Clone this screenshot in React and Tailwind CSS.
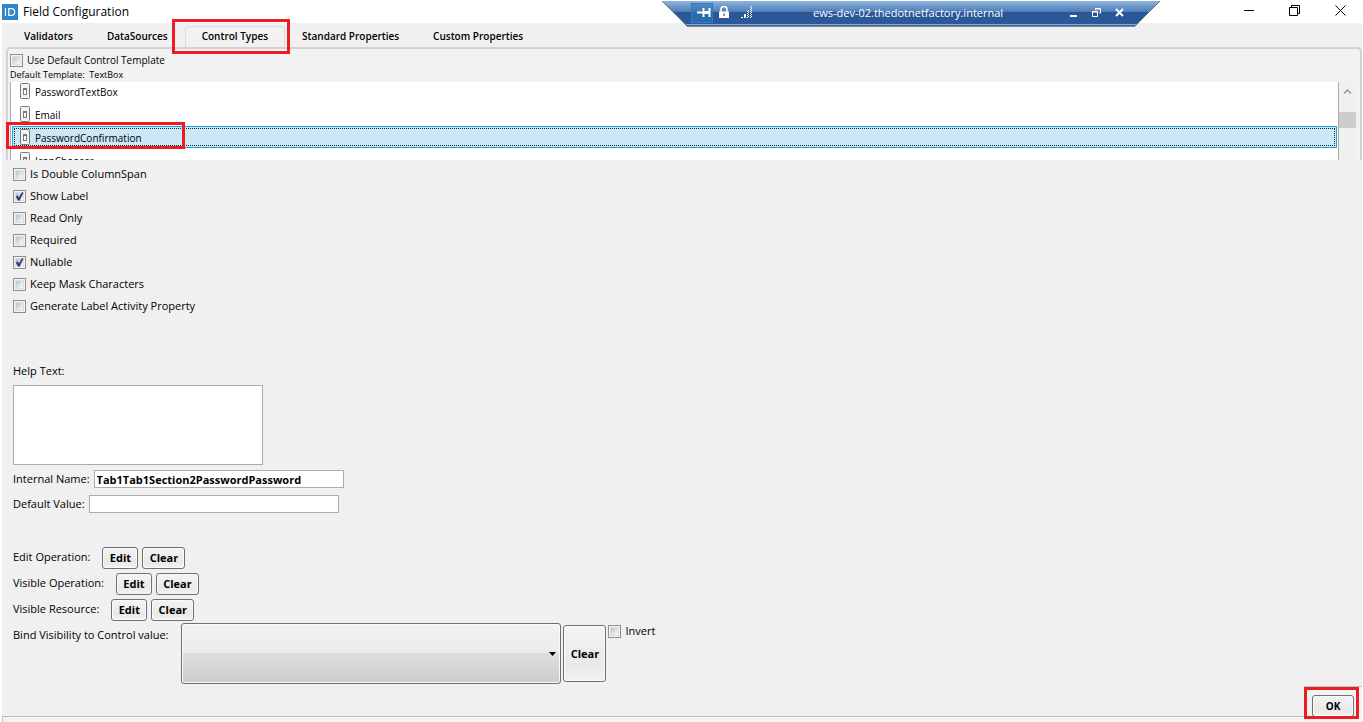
import { useState } from 'react';
import clsx from 'clsx';

const tabs = ['Validators', 'DataSources', 'Control Types', 'Standard Properties', 'Custom Properties'];

const templates = ['PasswordTextBox', 'Email', 'PasswordConfirmation', 'IconChooser'];

const options = [
  { label: 'Is Double ColumnSpan', checked: false },
  { label: 'Show Label', checked: true },
  { label: 'Read Only', checked: false },
  { label: 'Required', checked: false },
  { label: 'Nullable', checked: true },
  { label: 'Keep Mask Characters', checked: false },
  { label: 'Generate Label Activity Property', checked: false },
];

const operations = ['Edit Operation:', 'Visible Operation:', 'Visible Resource:'];

function Highlight({ className }) {
  return <div className={clsx('absolute pointer-events-none border-3 border-[#ed1c24] z-10', className)} />;
}

function CheckBox({ label, checked = false, className }) {
  return (
    <label className={clsx('flex w-fit items-center gap-1', className)}>
      <span className="relative h-[13px] w-[13px] shrink-0">
        <input
          type="checkbox"
          defaultChecked={checked}
          className="peer block h-[13px] w-[13px] appearance-none border border-[#8e8f8f] bg-linear-to-br from-[#a9afba] to-[#fbfbfb] to-80% shadow-[inset_0_0_0_1px_#f4f4f4,inset_0_0_0_2px_#dcdee0]"
        />
        <svg viewBox="0 0 13 13" className="absolute inset-0 hidden h-[13px] w-[13px] pointer-events-none peer-checked:block">
          <path d="M3 6.4 4.7 5.8 5.8 8 9 2.6 10.2 2.8 6.4 10.4 5.2 10.4Z" fill="#28307c" stroke="#28307c" strokeWidth="0.4" />
        </svg>
      </span>
      <span>{label}</span>
    </label>
  );
}

function PushButton({ children, className }) {
  return (
    <button
      type="button"
      className={clsx(
        'rounded-[3px] border border-[#707070] bg-linear-to-b from-[#f4f4f4] via-[#e8e8e8] via-70% to-[#f3f3f3] text-center font-bold shadow-[inset_0_0_0_1px_#fafafa]',
        className
      )}
    >
      {children}
    </button>
  );
}

function TemplateIcon() {
  return (
    <svg width="10" height="16" viewBox="0 0 10 16" className="shrink-0">
      <rect x="0.5" y="0.5" width="9" height="15" rx="1" fill="#f4f4f4" stroke="#777" />
      <rect x="3.5" y="5.5" width="3" height="6" fill="#fff" stroke="#777" />
      <path d="M4 6.500h2" stroke="#777" />
    </svg>
  );
}

function RemoteBar() {
  return (
    <div className="absolute left-[662px] top-0 h-[27px] w-[499px] text-white">
      <svg viewBox="0 0 499 27" className="absolute inset-0 h-[27px] w-[499px]">
        <defs>
          <linearGradient id="remote" x1="0" y1="0" x2="0" y2="1">
            <stop offset="0" stopColor="#8db4dc" />
            <stop offset="0.44" stopColor="#4c7ab4" />
            <stop offset="0.45" stopColor="#2a5696" />
            <stop offset="1" stopColor="#2a5a9c" />
          </linearGradient>
        </defs>
        <path d="M0.5 1H498L473 26.5H25Z" fill="url(#remote)" />
        <path d="M24 24.5H475" stroke="#8aa9d6" />
        <path d="M0 1 25.500 26H473L498 1" fill="none" stroke="#626a76" />
      </svg>
      <div className="relative flex h-[25px] items-center pl-[29px] pr-[30px]">
        <button type="button" aria-label="Pin" className="h-5 w-[22px] border border-[#2d7dc8] bg-[#2f77bd]/60">
          <svg width="19" height="18" viewBox="0 0 19 18">
            <path d="M5 8.500h6M11.500 4v9M17.500 4v9" stroke="#fff" strokeWidth="2" fill="none" />
            <path d="M12 8.500h5" stroke="#fff" strokeWidth="3" />
          </svg>
        </button>
        <svg width="10" height="13" viewBox="0 0 10 13" className="ml-1.5">
          <path d="M2 6V3.500a3 3 0 0 1 6 0V6" fill="none" stroke="#fff" strokeWidth="1.600" />
          <path d="M0 5.500h10V12H0z" fill="#fff" />
          <path d="M4.500 7.500h1.200v2.500h-1.200z" fill="#2a5696" />
        </svg>
        <svg width="12" height="13" viewBox="0 0 12 13" className="ml-3">
          <path d="M0 11h2v1H0zM3 8h2v4H3z" fill="#fff" />
          <path d="M6.500 12V5M9.500 12V1" stroke="#fff" strokeDasharray="1 1" fill="none" />
          <path d="M7.500 11V4M10.500 11V0" stroke="#fff" strokeDasharray="1 1" fill="none" />
        </svg>
        <span className="ml-15 grow text-[11px]">ews-dev-02.thedotnetfactory.internal</span>
        <div className="flex">
          <button type="button" aria-label="Minimize session" className="flex h-5 w-[23px] items-center justify-center">
            <svg width="11" height="11" viewBox="0 0 11 11"><path d="M2 9h7" stroke="#fff" strokeWidth="2" /></svg>
          </button>
          <button type="button" aria-label="Restore session" className="flex h-5 w-[23px] items-center justify-center">
            <svg width="11" height="11" viewBox="0 0 11 11">
              <path d="M1.500 4.500h5v5h-5zM1 5h6M4.500 3V1.500h5v4.500H8M4 2h6" fill="none" stroke="#fff" />
            </svg>
          </button>
          <button type="button" aria-label="Close session" className="flex h-5 w-[23px] items-center justify-center">
            <svg width="11" height="11" viewBox="0 0 11 11"><path d="M2 2l7 7M9 2l-7 7" stroke="#fff" strokeWidth="2" /></svg>
          </button>
        </div>
      </div>
    </div>
  );
}

function TitleBar() {
  return (
    <header className="relative flex h-[23px] items-center bg-white pl-0.5">
      <svg width="16" height="16" viewBox="0 0 16 16">
        <rect width="16" height="16" fill="#2e86cf" />
        <path d="M3.500 4v8M6.800 4.600v6.800h2.400q3.500 0 3.500-3.400t-3.500-3.400z" fill="none" stroke="#fff" strokeWidth="1.200" />
      </svg>
      <h1 className="ml-[5px] grow text-[12px] leading-4">Field Configuration</h1>
      <RemoteBar />
      <div className="flex pb-0.5">
        <button type="button" aria-label="Minimize" className="flex w-[46px] justify-center">
          <svg width="11" height="11" viewBox="0 0 11 11"><path d="M1 5.500h10" stroke="#000" /></svg>
        </button>
        <button type="button" aria-label="Restore" className="flex w-[46px] justify-center">
          <svg width="11" height="11" viewBox="0 0 11 11">
            <path d="M0.500 2.500h8v8h-8zM2.500 2.500v-2h8v8h-2" fill="none" stroke="#000" />
          </svg>
        </button>
        <button type="button" aria-label="Close" className="flex w-[46px] justify-center">
          <svg width="11" height="11" viewBox="0 0 11 11"><path d="M0.500 0.500l10 10M10.500 0.500l-10 10" stroke="#000" /></svg>
        </button>
      </div>
    </header>
  );
}

function TemplateList() {
  const [selected, setSelected] = useState('PasswordConfirmation');

  return (
    <div className="relative mr-0.5 flex h-[78px]">
      <Highlight className="-left-1 top-10 h-[27px] w-[179px]" />
      <ul className="grow overflow-hidden border-x border-[#ababab] bg-white pl-px pr-px" role="listbox">
        {templates.map((name) => (
          <li
            key={name}
            role="option"
            aria-selected={name === selected}
            onClick={() => setSelected(name)}
            className={clsx(
              'mb-px h-[22px] border p-px first:-mt-0.5',
              name === selected ? 'border-[#26a0da] bg-[#cbe8f6]' : 'border-transparent'
            )}
          >
            <div
              className={clsx(
                'flex h-full items-center gap-[5px] border border-dotted pl-[5px]',
                name === selected ? 'border-[#222]' : 'border-transparent'
              )}
            >
              <TemplateIcon />
              <span className="pt-0.5">{name}</span>
            </div>
          </li>
        ))}
      </ul>
      <div className="w-[17px] bg-[#f0f0f0]">
        <div className="flex h-[30px] justify-center pt-[5px]">
          <svg width="9" height="9" viewBox="0 0 9 9"><path d="M1 6.500 4.500 3 8 6.500" fill="none" stroke="#999" strokeWidth="1.500" /></svg>
        </div>
        <div className="h-4 bg-[#cdcdcd]" />
      </div>
    </div>
  );
}

export default function App() {
  return (
    <div className="flex min-h-screen flex-col bg-white font-['Open_Sans',sans-serif] text-[11px] leading-4 text-black">
      <TitleBar />
      <main className="ml-0.5 mr-px flex grow flex-col bg-[#f0f0f0]">
        <nav className="flex h-6 items-end pl-[5px] text-[10px] font-semibold">
          {tabs.map((tab) => (
            <button
              key={tab}
              type="button"
              className={clsx(
                'relative h-[21px] rounded-t-[4px] border border-b-0 px-4 pb-0.5',
                tab === 'Control Types' ? 'border-[#dcdcdc] bg-[#f2f2f2]' : 'border-transparent'
              )}
            >
              {tab}
              {tab === 'Control Types' && <Highlight className="-left-3.5 -right-1.5 -top-2 h-[35px]" />}
            </button>
          ))}
        </nav>

        <section className="ml-1 rounded-t-[5px] border-2 border-b-0 border-[#d2d2d2] bg-[#f2f2f2] px-0.5 pt-[3px] text-[10px]">
          <CheckBox label="Use Default Control Template" />
          <p className="h-[14px] pt-px text-[9px] leading-3">Default Template:&nbsp; TextBox</p>
          <TemplateList />
        </section>

        <div className="flex flex-col gap-1.5 px-[11px] pt-1.5">
          {options.map((option) => (
            <CheckBox key={option.label} {...option} />
          ))}
        </div>

        <form className="px-[11px] pt-[49px]">
          <label htmlFor="help" className="block">Help Text:</label>
          <textarea id="help" className="mt-1.5 block h-20 w-[250px] resize-none border border-[#abadb3] bg-white" />
          <div className="mt-[5px] flex items-center gap-1">
            <label htmlFor="internal">Internal Name:</label>
            <input
              id="internal"
              defaultValue="Tab1Tab1Section2PasswordPassword"
              className="h-[18px] w-[250px] border border-[#abadb3] bg-white px-0.5 font-bold"
            />
          </div>
          <div className="mt-[7px] flex items-center gap-1">
            <label htmlFor="default">Default Value:</label>
            <input id="default" className="h-[18px] w-[250px] border border-[#abadb3] bg-white px-0.5" />
          </div>

          <div className="mt-[34px] flex flex-col gap-1">
            {operations.map((name) => (
              <div key={name} className="flex h-[22px] gap-1">
                <span className="mr-2 pt-0.5">{name}</span>
                <PushButton className="w-9">Edit</PushButton>
                <PushButton className="w-[43px]">Clear</PushButton>
              </div>
            ))}
          </div>

          <div className="mt-0.5 flex items-start">
            <label htmlFor="bind" className="mr-[13px] pt-1">Bind Visibility to Control value:</label>
            <div className="relative">
              <select
                id="bind"
                className="block h-[61px] w-[380px] appearance-none rounded-[3px] border border-[#707070] bg-[linear-gradient(#f2f2f2,#ebebeb_50%,#dddddd_50%,#cdcdcd)] shadow-[inset_0_0_0_1px_#fafafa]"
              />
              <svg width="7" height="4" viewBox="0 0 7 4" className="pointer-events-none absolute right-[5px] top-[29px]">
                <path d="M0 0h7L3.500 4z" />
              </svg>
            </div>
            <PushButton className="ml-0.5 mt-0.5 h-[57px] w-[43px]">Clear</PushButton>
            <CheckBox label="Invert" className="ml-0.5" />
          </div>
        </form>

        <footer className="mt-auto flex items-end">
          <div className="h-1.5 grow border-t border-l border-[#bcbcbc] bg-[#f3f3f3]" />
          <div className="relative flex h-9 w-[58px] items-end justify-center border-t border-[#c4c4c4] bg-[#f3f3f3] pb-[5px]">
            <PushButton className="h-[22px] w-[42px] text-[10px]">OK</PushButton>
            <Highlight className="left-0 top-0 h-8 w-[55px]" />
          </div>
        </footer>
      </main>
    </div>
  );
}
